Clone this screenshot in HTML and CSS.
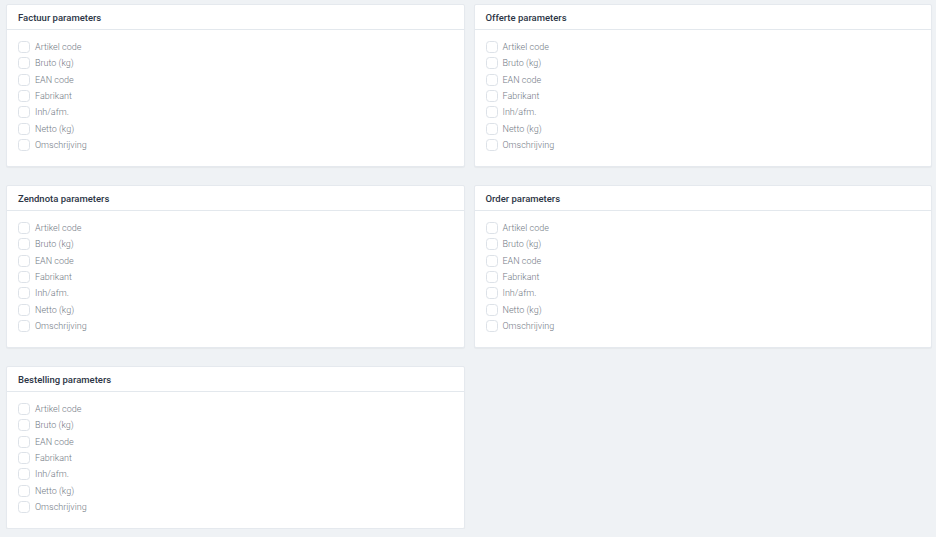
FILE: index.html
```html
<!DOCTYPE html>
<html lang="nl">
<head>
<meta charset="utf-8">
<title>Parameters</title>
<link rel="stylesheet" href="styles.css">
</head>
<body>
<div class="grid">
  <section class="card">
    <header class="card-header">Factuur parameters</header>
    <div class="card-body">
      <label class="check"><span class="box"></span>Artikel code</label>
      <label class="check"><span class="box"></span>Bruto (kg)</label>
      <label class="check"><span class="box"></span>EAN code</label>
      <label class="check"><span class="box"></span>Fabrikant</label>
      <label class="check"><span class="box"></span>Inh/afm.</label>
      <label class="check"><span class="box"></span>Netto (kg)</label>
      <label class="check"><span class="box"></span>Omschrijving</label>
    </div>
  </section>
  <section class="card">
    <header class="card-header">Offerte parameters</header>
    <div class="card-body">
      <label class="check"><span class="box"></span>Artikel code</label>
      <label class="check"><span class="box"></span>Bruto (kg)</label>
      <label class="check"><span class="box"></span>EAN code</label>
      <label class="check"><span class="box"></span>Fabrikant</label>
      <label class="check"><span class="box"></span>Inh/afm.</label>
      <label class="check"><span class="box"></span>Netto (kg)</label>
      <label class="check"><span class="box"></span>Omschrijving</label>
    </div>
  </section>
  <section class="card">
    <header class="card-header">Zendnota parameters</header>
    <div class="card-body">
      <label class="check"><span class="box"></span>Artikel code</label>
      <label class="check"><span class="box"></span>Bruto (kg)</label>
      <label class="check"><span class="box"></span>EAN code</label>
      <label class="check"><span class="box"></span>Fabrikant</label>
      <label class="check"><span class="box"></span>Inh/afm.</label>
      <label class="check"><span class="box"></span>Netto (kg)</label>
      <label class="check"><span class="box"></span>Omschrijving</label>
    </div>
  </section>
  <section class="card">
    <header class="card-header">Order parameters</header>
    <div class="card-body">
      <label class="check"><span class="box"></span>Artikel code</label>
      <label class="check"><span class="box"></span>Bruto (kg)</label>
      <label class="check"><span class="box"></span>EAN code</label>
      <label class="check"><span class="box"></span>Fabrikant</label>
      <label class="check"><span class="box"></span>Inh/afm.</label>
      <label class="check"><span class="box"></span>Netto (kg)</label>
      <label class="check"><span class="box"></span>Omschrijving</label>
    </div>
  </section>
  <section class="card">
    <header class="card-header">Bestelling parameters</header>
    <div class="card-body">
      <label class="check"><span class="box"></span>Artikel code</label>
      <label class="check"><span class="box"></span>Bruto (kg)</label>
      <label class="check"><span class="box"></span>EAN code</label>
      <label class="check"><span class="box"></span>Fabrikant</label>
      <label class="check"><span class="box"></span>Inh/afm.</label>
      <label class="check"><span class="box"></span>Netto (kg)</label>
      <label class="check"><span class="box"></span>Omschrijving</label>
    </div>
  </section>
</div>
</body>
</html>
```
FILE: styles.css
```css
html, body {
  margin: 0;
  padding: 0;
  background: #eff2f5;
  font-family: Roboto, "Liberation Sans", sans-serif;
}
.grid {
  display: grid;
  grid-template-columns: 1fr 1fr;
  column-gap: 9px;
  row-gap: 18px;
  padding: 4px 4px 0 6px;
}
.card {
  background: #fff;
  border: 1px solid #e5e9ee;
  border-radius: 2px;
  box-shadow: 0 1px 1px rgba(0,0,0,0.04);
  height: 163px;
  box-sizing: border-box;
}
.card-header {
  height: 25px;
  box-sizing: border-box;
  border-bottom: 1px solid #e3e8ed;
  padding: 0 11px;
  display: flex;
  align-items: center;
  font-size: 9.5px;
  font-weight: 500;
  color: #2c3545;
}
.card-body {
  padding: 9px 11px 0;
  display: flex;
  flex-direction: column;
}
.check {
  display: flex;
  align-items: center;
  height: 16.3px;
  font-size: 9px;
  font-weight: 300;
  color: #737a85;
}
.box {
  width: 12px;
  height: 12px;
  box-sizing: border-box;
  border: 1px solid #dde2e8;
  border-radius: 3.5px;
  margin-right: 5px;
  background: #fff;
  flex: none;
}
```
